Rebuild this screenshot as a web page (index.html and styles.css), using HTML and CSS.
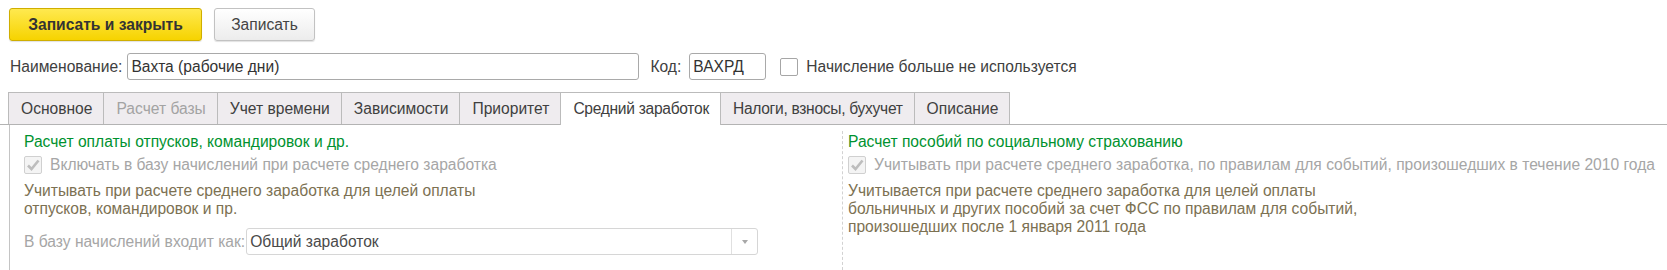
FILE: index.html
```html
<!DOCTYPE html>
<html lang="ru">
<head>
    <meta charset="UTF-8">
    <meta name="viewport" content="width=device-width, initial-scale=1.0">
    <title>Вахта (рабочие дни)</title>
    <link rel="stylesheet" href="styles.css">
</head>
<body>
    <div class="toolbar">
        <button class="btn btn-primary">Записать и закрыть</button>
        <button class="btn">Записать</button>
    </div>

    <div class="header-row">
        <span class="field-label">Наименование:</span>
        <div class="text-input name-input">Вахта (рабочие дни)</div>
        <span class="field-label code-label">Код:</span>
        <div class="text-input code-input">ВАХРД</div>
        <span class="checkbox"></span>
        <span class="check-label">Начисление больше не используется</span>
    </div>

    <div class="tabs">
        <div class="tab">Основное</div>
        <div class="tab disabled">Расчет базы</div>
        <div class="tab">Учет времени</div>
        <div class="tab">Зависимости</div>
        <div class="tab">Приоритет</div>
        <div class="tab active tight">Средний заработок</div>
        <div class="tab tight">Налоги, взносы, бухучет</div>
        <div class="tab">Описание</div>
    </div>

    <div class="panel">
        <!-- left: vacation / business trips -->
        <div class="column">
            <div class="group-title">Расчет оплаты отпусков, командировок и др.</div>
            <div class="check-row">
                <span class="checkbox checked">
                    <svg width="18" height="18" viewBox="0 0 18 18"><path d="M4 9.5 L7.5 13 L14.5 4.5" fill="none" stroke="#bdbdbd" stroke-width="2.6"/></svg>
                </span>
                <span class="muted">Включать в базу начислений при расчете среднего заработка</span>
            </div>
            <p class="note">Учитывать при расчете среднего заработка для целей оплаты<br>отпусков, командировок и пр.</p>
            <div class="select-row">
                <span class="muted">В базу начислений входит как:</span>
                <div class="select">
                    <span class="select-value">Общий заработок</span>
                    <span class="select-arrow"></span>
                </div>
            </div>
        </div>

        <!-- right: social insurance -->
        <div class="column column-right">
            <div class="group-title">Расчет пособий по социальному страхованию</div>
            <div class="check-row">
                <span class="checkbox checked">
                    <svg width="18" height="18" viewBox="0 0 18 18"><path d="M4 9.5 L7.5 13 L14.5 4.5" fill="none" stroke="#bdbdbd" stroke-width="2.6"/></svg>
                </span>
                <span class="muted">Учитывать при расчете среднего заработка, по правилам для событий, произошедших в течение 2010 года</span>
            </div>
            <p class="note">Учитывается при расчете среднего заработка для целей оплаты<br>больничных и других пособий за счет ФСС по правилам для событий,<br>произошедших после 1 января 2011 года</p>
        </div>
    </div>
</body>
</html>
```

FILE: styles.css
```css
* {
    box-sizing: border-box;
}

html, body {
    height: 100%;
}

body {
    margin: 0;
    font-family: 'Liberation Sans', Arial, sans-serif;
    font-size: 15.6px;
    line-height: 18px;
    color: #404040;
    background: #fff;
    display: flex;
    flex-direction: column;
    overflow: hidden;
}

.toolbar {
    display: flex;
    gap: 12px;
    padding: 8px 0 0 9px;
}

.btn {
    height: 33px;
    padding: 0;
    font-family: inherit;
    font-size: 15.6px;
    color: #444;
    background: linear-gradient(#ffffff, #ececec);
    border: 1px solid #c2c2c2;
    border-radius: 3px;
    box-shadow: 0 1px 1px rgba(0, 0, 0, 0.12);
}

.btn-primary {
    width: 193px;
    font-weight: bold;
    color: #333;
    background: linear-gradient(#ffe94f, #f6d300);
    border-color: #cfae00;
}

.btn:not(.btn-primary) {
    width: 101px;
}

.header-row {
    display: flex;
    align-items: center;
    margin-top: 12px;
    padding-left: 10px;
}

.field-label {
    margin-right: 5px;
}

.code-label {
    margin-left: 11px;
    margin-right: 8px;
}

.text-input {
    height: 27px;
    padding: 4px 3px 0;
    border: 1px solid #a9a9a9;
    border-radius: 3px;
    color: #333;
    white-space: nowrap;
}

.name-input {
    width: 512px;
}

.code-input {
    width: 77px;
}

.checkbox {
    display: inline-block;
    flex: none;
    width: 18px;
    height: 18px;
    border: 1px solid #a6a6a6;
    border-radius: 2px;
    background: #fff;
}

.header-row .checkbox {
    margin-left: 14px;
}

.checkbox.checked {
    border-color: #d0d0d0;
    background: #f4f4f4;
    position: relative;
}

.checkbox.checked svg {
    position: absolute;
    left: -1px;
    top: -1px;
}

.check-label {
    margin-left: 8px;
}

.tabs {
    display: flex;
    align-items: flex-start;
    margin-top: 12px;
    padding-left: 8px;
    border-bottom: 1px solid #b3b3b3;
}

.tab {
    height: 32px;
    padding: 7px 11px 0 12px;
    margin-right: -1px;
    background: #efecef;
    border: 1px solid #bbb;
    border-bottom: none;
    white-space: nowrap;
}

.tab.tight {
    letter-spacing: -0.3px;
}

.tab.disabled {
    color: #a3a3a3;
}

.tab.active {
    height: 33px;
    margin-bottom: -1px;
    background: #fff;
    position: relative;
}

.panel {
    flex: 1;
    display: grid;
    grid-template-columns: 818px 1fr;
    margin-left: 9px;
    padding: 6px 0 0 14px;
    border-left: 1px solid #c4c4c4;
}

.column {
    padding-top: 2px;
}

.column-right {
    border-left: 1px dashed #d2d2d2;
    padding-left: 5px;
}

.group-title {
    color: #00922f;
}

.check-row {
    display: flex;
    align-items: center;
    gap: 8px;
    margin-top: 5px;
    white-space: nowrap;
}

.muted {
    color: #a6a6a6;
}

.note {
    margin: 8px 0 0;
    color: #7c7152;
}

.select-row {
    display: flex;
    align-items: center;
    gap: 1px;
    margin-top: 10px;
}

.select {
    display: flex;
    width: 512px;
    height: 27px;
    border: 1px solid #d6d6d6;
    border-radius: 3px;
}

.select-value {
    flex: 1;
    padding: 4px 3px 0;
    color: #4a4a4a;
}

.select-arrow {
    width: 26px;
    border-left: 1px solid #e0e0e0;
    position: relative;
}

.select-arrow::after {
    content: '';
    position: absolute;
    left: 10px;
    top: 11px;
    border-left: 3px solid transparent;
    border-right: 3px solid transparent;
    border-top: 4px solid #a8a8a8;
}
```
